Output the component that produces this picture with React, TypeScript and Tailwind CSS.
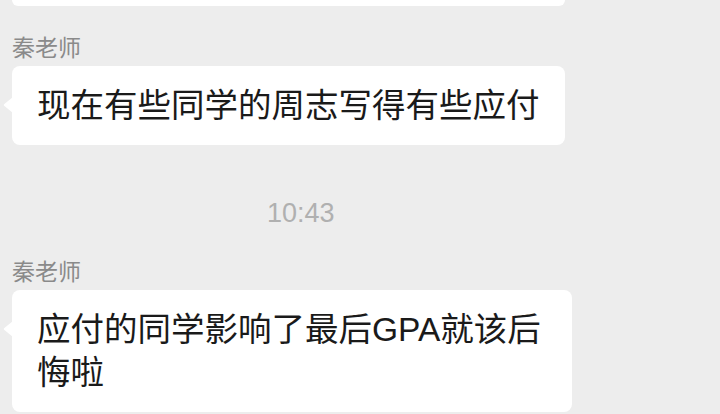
import React from 'react';

const font = { fontFamily: '"Liberation Sans", "Noto Sans CJK SC", sans-serif' };

function Tail() {
  return (
    <svg
      className="absolute left-[-9px] top-[31px]"
      width="10"
      height="16"
      viewBox="0 0 10 16"
    >
      <path d="M10 0 L1.4 6.9 Q0 8 1.4 9.1 L10 16 Z" fill="#ffffff" />
    </svg>
  );
}

function Message({ name, text }: { name: string; text: string }) {
  return (
    <div className="flex flex-col items-start">
      <div className="text-[23px] leading-[28px] text-[#8a8a8a]">{name}</div>
      <div className="relative mt-[4px] max-w-[560px] rounded-[8px] bg-white px-[25px] py-[18px] text-[33.5px] leading-[43px] text-[#1a1a1a]">
        <Tail />
        {text}
      </div>
    </div>
  );
}

export default function App() {
  return (
    <div className="h-[414px] w-[720px] overflow-hidden bg-[#ededed] px-[12px]" style={font}>
      <div className="h-[6px] w-[553px] rounded-b-[8px] bg-white" />

      <div className="mt-[28px]">
        <Message name="秦老师" text="现在有些同学的周志写得有些应付" />
      </div>

      <div className="mt-[52px] pl-[255px] text-[27px] leading-[32px] text-[#b0b0b0]">
        10:43
      </div>

      <div className="mt-[29px]">
        <Message name="秦老师" text="应付的同学影响了最后GPA就该后悔啦" />
      </div>
    </div>
  );
}
